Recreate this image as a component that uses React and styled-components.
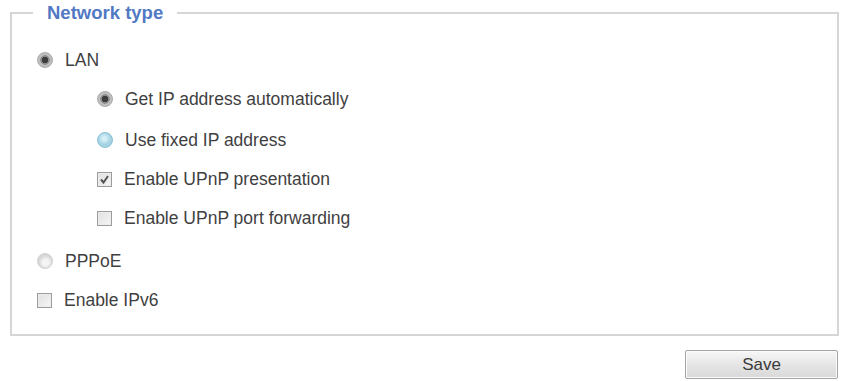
import React from 'react';
import styled, { createGlobalStyle } from 'styled-components';

const GlobalStyle = createGlobalStyle`
  html, body {
    margin: 0;
    padding: 0;
    background: #ffffff;
  }
  body {
    font-family: "Liberation Sans", Arial, sans-serif;
    color: #3a3a3a;
  }
`;

const Page = styled.div`
  width: 842px;
  height: 381px;
  box-sizing: border-box;
  padding: 2px 3px 0 10px;
  display: flex;
  flex-direction: column;
`;

const Fieldset = styled.fieldset`
  margin: 0;
  padding: 17px 0 15px 25px;
  border: 2px solid #d6d6d6;
  display: flex;
  flex-direction: column;
  gap: 1px;
`;

const Legend = styled.legend`
  margin-left: -4px;
  padding: 0 14px;
  font-size: 18.5px;
  line-height: 22px;
  font-weight: bold;
  color: #5279c4;
`;

const Row = styled.label`
  display: flex;
  align-items: center;
  height: 38px;
  gap: 12px;
  padding-left: ${(p) => (p.$nested ? '60px' : '0')};
  margin-top: ${(p) => p.$gapTop || 0}px;
  font-size: 17.5px;
  color: #3f3f3f;
`;

const radioLook = {
  checked: {
    bg: 'radial-gradient(circle at 50% 50%, #3d3d3d 0 3px, #8d8d8d 3.5px 4.5px, #bfbfbf 5px)',
    border: '#a9a9a9',
  },
  focus: {
    bg: 'radial-gradient(circle at 45% 40%, #d3eef7 0 2px, #a6d3e4 6px)',
    border: '#8cc1d6',
  },
  off: {
    bg: 'radial-gradient(circle at 55% 60%, #f4f4f4 0 3px, #d6d6d6 7px)',
    border: '#cfcfcf',
  },
};

const Radio = styled.span`
  width: 16px;
  height: 16px;
  border-radius: 50%;
  box-sizing: border-box;
  flex: none;
  border: 1px solid ${(p) => radioLook[p.$state].border};
  background: ${(p) => radioLook[p.$state].bg};
`;

const Box = styled.span`
  width: 15px;
  height: 15px;
  box-sizing: border-box;
  flex: none;
  border: 1px solid #9c9c9c;
  background: linear-gradient(135deg, #e0e0e0, #f6f6f6);
  box-shadow: inset 0 0 0 1px #ececec;
  display: flex;
  align-items: center;
  justify-content: center;
`;

const Check = ({ on }) => (
  <Box>
    {on && (
      <svg width="11" height="11" viewBox="0 0 11 11">
        <path d="M2 5.5 L4.5 8.5 L9 2" fill="none" stroke="#555555" strokeWidth="2" />
      </svg>
    )}
  </Box>
);

const Footer = styled.div`
  display: flex;
  justify-content: flex-end;
  margin-top: 14px;
  padding-right: 1px;
`;

const SaveButton = styled.button`
  width: 153px;
  height: 29px;
  border: 1px solid #a4a4a4;
  border-radius: 2px;
  background: linear-gradient(#f7f7f7, #e4e4e4 55%, #d9d9d9);
  box-shadow: inset 0 0 0 1px #fbfbfb;
  font-family: "Liberation Sans", Arial, sans-serif;
  font-size: 17px;
  color: #3a3a3a;
  padding: 0;
`;

export default function App() {
  return (
    <>
      <GlobalStyle />
      <Page>
        <Fieldset>
          <Legend>Network type</Legend>
          <Row>
            <Radio $state="checked" />
            LAN
          </Row>
          <Row $nested>
            <Radio $state="checked" />
            Get IP address automatically
          </Row>
          <Row $nested $gapTop={2}>
            <Radio $state="focus" />
            Use fixed IP address
          </Row>
          <Row $nested>
            <Check on />
            Enable UPnP presentation
          </Row>
          <Row $nested>
            <Check />
            Enable UPnP port forwarding
          </Row>
          <Row $gapTop={4}>
            <Radio $state="off" />
            PPPoE
          </Row>
          <Row>
            <Check />
            Enable IPv6
          </Row>
        </Fieldset>
        <Footer>
          <SaveButton>Save</SaveButton>
        </Footer>
      </Page>
    </>
  );
}
